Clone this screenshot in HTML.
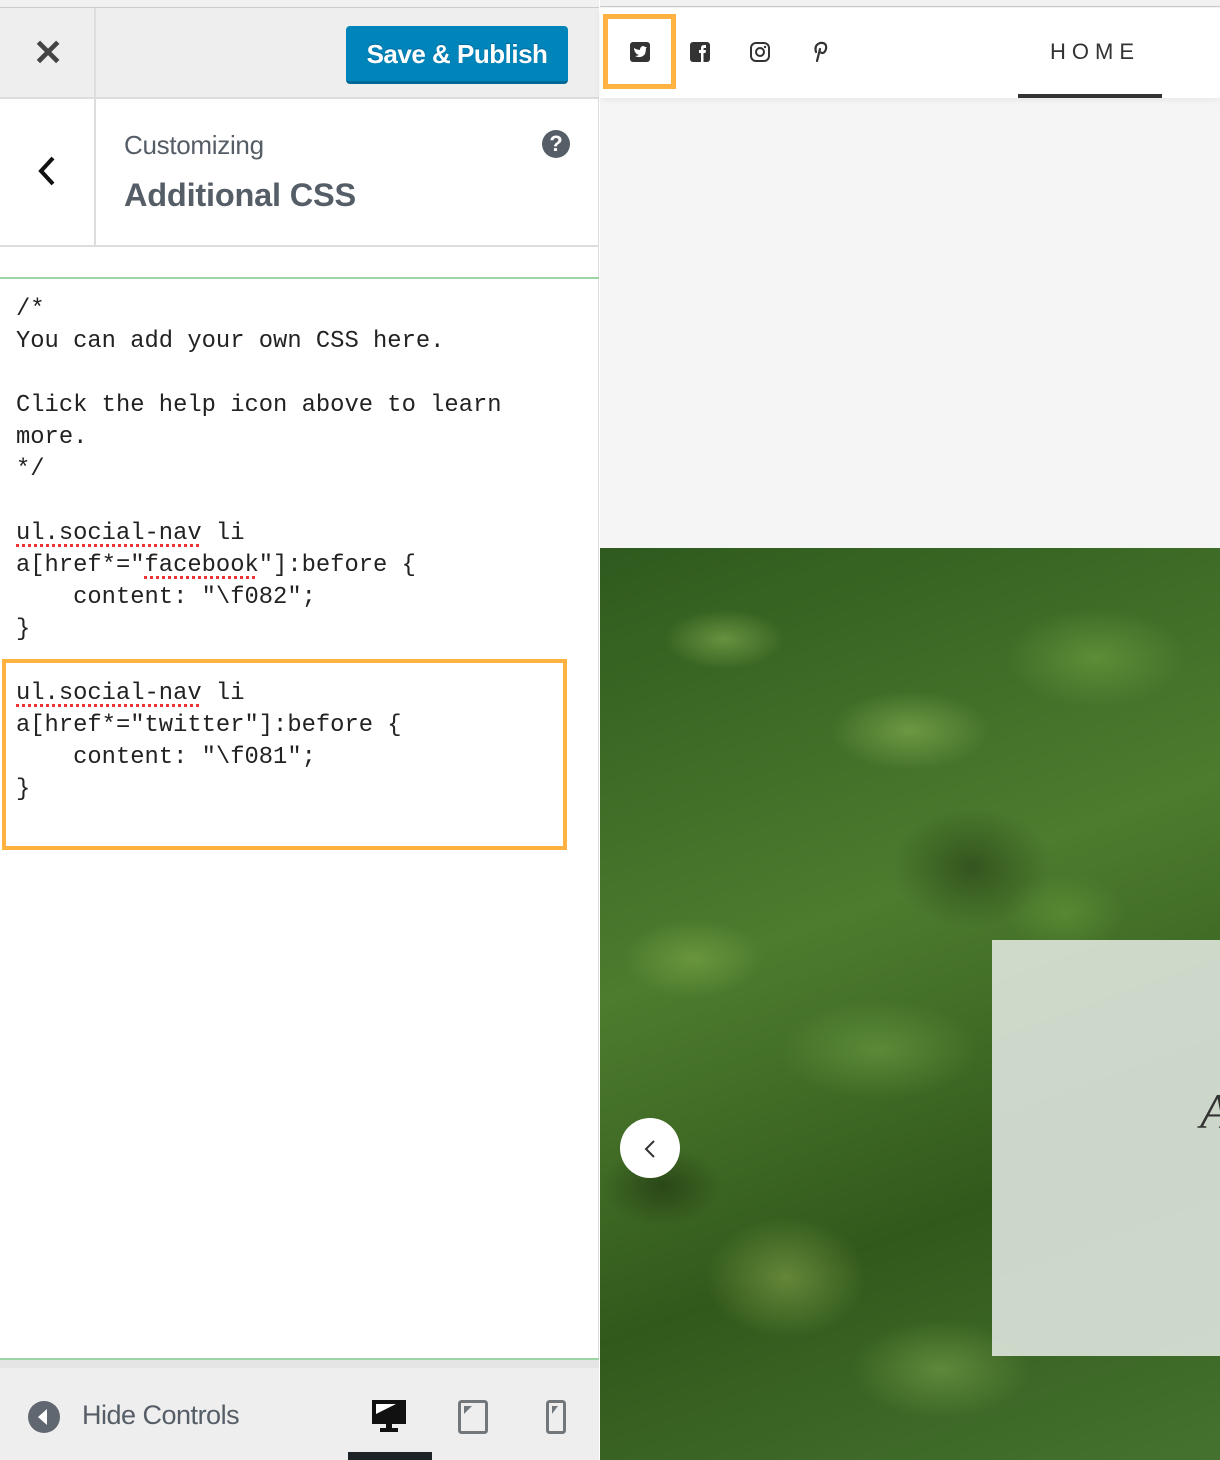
<!DOCTYPE html>
<html><head><meta charset="utf-8"><style>
*{margin:0;padding:0;box-sizing:border-box}
body{width:1220px;height:1460px;position:relative;overflow:hidden;background:#fff;font-family:"Liberation Sans",sans-serif}
.abs{position:absolute}
#left{left:0;top:0;width:599px;height:1460px;background:#fff;border-right:1px solid #ddd}
#topbar{left:0;top:0;width:599px;height:99px;background:#eee;border-top:7px solid #f1f1f1;border-bottom:2px solid #ddd}
#topbar:before{content:"";position:absolute;left:0;top:0;right:0;height:1px;background:#ccc}
.btn{left:346px;top:26px;width:222px;height:58px;background:#0085ba;border-radius:4px;border-bottom:3px solid #006799;color:#fff;font-size:26px;font-weight:bold;text-align:center;line-height:56px;letter-spacing:-0.5px;text-shadow:0 -1px 1px #006799}
pre{font-family:"Liberation Mono",monospace;font-size:23.8px;line-height:32px;color:#222}
.sq{text-decoration:underline dotted #e33;text-underline-offset:5px;text-decoration-thickness:3px}
</style></head><body>
<div id="left" class="abs">
 <div id="topbar" class="abs"></div>
 <div class="abs" style="left:94px;top:8px;width:2px;height:238px;background:#ddd"></div>
 <div class="abs" style="left:33px;top:33px;font-size:36px;font-weight:bold;color:#444;line-height:40px">✕</div>
 <div class="abs btn">Save &amp; Publish</div>
 <div class="abs" style="left:0;top:245px;width:599px;height:2px;background:#ddd"></div>
 <svg class="abs" style="left:36px;top:155px" width="22" height="32"><path d="M17 3 L5 16 L17 29" stroke="#111" stroke-width="4" fill="none"/></svg>
 <div class="abs" style="left:124px;top:130px;font-size:26px;color:#555d66;letter-spacing:-0.3px">Customizing</div>
 <div class="abs" style="left:124px;top:177px;font-size:32.5px;font-weight:bold;color:#555d66;letter-spacing:-0.2px">Additional CSS</div>
 <div class="abs" style="left:542px;top:130px;width:28px;height:28px;border-radius:50%;background:#555d66;color:#fff;font-weight:bold;font-size:22px;text-align:center;line-height:28px">?</div>
 <div class="abs" style="left:0;top:277px;width:599px;height:2px;background:#9cd4a4"></div>
 <pre class="abs" style="left:16px;top:294px">/*
You can add your own CSS here.

Click the help icon above to learn
more.
*/

<span class="sq">ul.social-nav</span> li
a[href*="<span class="sq">facebook</span>"]:before {
    content: "\f082";
}

<span class="sq">ul.social-nav</span> li
a[href*="twitter"]:before {
    content: "\f081";
}</pre>
 <div class="abs" style="left:2px;top:659px;width:565px;height:191px;border:4px solid #ffb142"></div>
 <div class="abs" style="left:0;top:1358px;width:599px;height:2px;background:#9cd4a4"></div>
 <div class="abs" style="left:0;top:1360px;width:599px;height:100px;background:#eee;border-top:8px solid #e5e5e5"></div>
 <svg class="abs" style="left:27px;top:1400px" width="34" height="34"><circle cx="17" cy="17" r="16" fill="#606770"/><path d="M20 9 L11 17 L20 25Z" fill="#fff"/></svg>
 <div class="abs" style="left:82px;top:1400px;font-size:27px;color:#555d66;letter-spacing:-0.5px">Hide Controls</div>
 <svg class="abs" style="left:372px;top:1400px" width="34" height="34"><rect x="0" y="0" width="34" height="24" fill="#111"/><path d="M4 4 H24 L4 14Z" fill="#fff"/><rect x="14" y="24" width="6" height="4" fill="#111"/><rect x="8" y="28" width="18" height="4" fill="#111"/></svg>
 <div class="abs" style="left:348px;top:1452px;width:84px;height:8px;background:#1d2327"></div>
 <svg class="abs" style="left:458px;top:1400px" width="30" height="34"><rect x="1.5" y="1.5" width="27" height="31" rx="2" fill="none" stroke="#72777c" stroke-width="3"/><path d="M6 6 H14 L6 14Z" fill="#72777c"/></svg>
 <svg class="abs" style="left:546px;top:1400px" width="20" height="34"><rect x="1.5" y="1.5" width="17" height="31" rx="2" fill="none" stroke="#72777c" stroke-width="3"/><path d="M6 6 H12 L6 14Z" fill="#72777c"/></svg>
</div>

<div class="abs" style="left:600px;top:0;width:620px;height:548px;background:#f5f5f5"></div>
<div class="abs" style="left:600px;top:0;width:620px;height:7px;background:#f1f1f1;border-bottom:1px solid #ccc"></div>
<div class="abs" style="left:600px;top:8px;width:620px;height:90px;background:#fff;box-shadow:0 2px 6px rgba(0,0,0,.06)"></div>
<div class="abs" style="left:603px;top:14px;width:73px;height:75px;border:5px solid #ffb142"></div>
<svg class="abs" style="left:630px;top:42px" width="20" height="20"><rect width="20" height="20" rx="3" fill="#333"/><path d="M4 7 Q5 12 9 13 Q7 14 5 14 Q11 17 15 12 Q16 9 16 6 L17 5 L15 5 Q13 3 11 5 Q10 6 10 8 Q7 8 4 6Z" fill="#fff"/></svg>
<svg class="abs" style="left:690px;top:42px" width="20" height="20"><rect width="20" height="20" rx="3" fill="#333"/><path d="M11 20 V11 H9 V8 H11 V6 Q11 3 14 3 H16 V6 H14 Q13.5 6 13.5 7 V8 H16 L15.5 11 H13.5 V20Z" fill="#fff"/></svg>
<svg class="abs" style="left:750px;top:42px" width="20" height="20"><rect x="1" y="1" width="18" height="18" rx="5" fill="none" stroke="#333" stroke-width="2"/><circle cx="10" cy="10" r="4" fill="none" stroke="#333" stroke-width="2"/><circle cx="15" cy="5" r="1.2" fill="#333"/></svg>
<svg class="abs" style="left:811px;top:40px" width="18" height="22"><path d="M6 21 L9 9 M5 12 Q3 5 9 3 Q16 2 15 9 Q13 15 9 12" fill="none" stroke="#333" stroke-width="2.2" stroke-linecap="round"/></svg>
<div class="abs" style="left:1050px;top:39px;font-size:22px;letter-spacing:6px;color:#333">HOME</div>
<div class="abs" style="left:1018px;top:94px;width:144px;height:4px;background:#333"></div>

<div class="abs" style="left:600px;top:548px;width:620px;height:912px;background:
radial-gradient(ellipse 60px 30px at 20% 10%,rgba(150,190,90,.5),transparent),
radial-gradient(ellipse 80px 40px at 50% 20%,rgba(160,200,100,.45),transparent),
radial-gradient(ellipse 90px 50px at 80% 12%,rgba(120,170,70,.5),transparent),
radial-gradient(ellipse 70px 40px at 15% 45%,rgba(140,180,80,.45),transparent),
radial-gradient(ellipse 100px 50px at 45% 55%,rgba(130,180,80,.4),transparent),
radial-gradient(ellipse 80px 60px at 30% 80%,rgba(160,190,90,.45),transparent),
radial-gradient(ellipse 90px 50px at 55% 90%,rgba(150,190,90,.4),transparent),
radial-gradient(ellipse 60px 40px at 75% 40%,rgba(110,160,60,.45),transparent),
radial-gradient(ellipse 60px 40px at 10% 70%,rgba(30,50,15,.6),transparent),
radial-gradient(ellipse 80px 60px at 60% 35%,rgba(25,45,15,.5),transparent),
linear-gradient(160deg,#2f5a1e,#4d7c2e 40%,#32591c 70%,#45732f)"></div>
<div class="abs" style="left:992px;top:940px;width:228px;height:416px;background:rgba(232,236,232,.85)"></div>
<div class="abs" style="left:1200px;top:1082px;font-family:'Liberation Serif',serif;font-style:italic;font-size:50px;color:#333">A</div>
<div class="abs" style="left:620px;top:1118px;width:60px;height:60px;border-radius:50%;background:#fff"></div>
<svg class="abs" style="left:642px;top:1139px" width="16" height="20"><path d="M12 2 L4 10 L12 18" stroke="#333" stroke-width="2" fill="none"/></svg>
</body></html>
